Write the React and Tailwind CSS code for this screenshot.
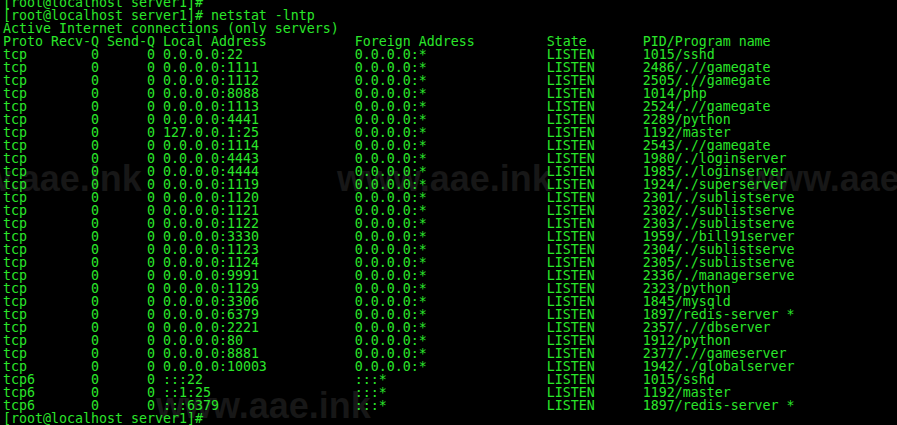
import React from "react";

const rows = [
  ["tcp", "0.0.0.0:22", "0.0.0.0:*", "1015/sshd"],
  ["tcp", "0.0.0.0:1111", "0.0.0.0:*", "2486/.//gamegate"],
  ["tcp", "0.0.0.0:1112", "0.0.0.0:*", "2505/.//gamegate"],
  ["tcp", "0.0.0.0:8088", "0.0.0.0:*", "1014/php"],
  ["tcp", "0.0.0.0:1113", "0.0.0.0:*", "2524/.//gamegate"],
  ["tcp", "0.0.0.0:4441", "0.0.0.0:*", "2289/python"],
  ["tcp", "127.0.0.1:25", "0.0.0.0:*", "1192/master"],
  ["tcp", "0.0.0.0:1114", "0.0.0.0:*", "2543/.//gamegate"],
  ["tcp", "0.0.0.0:4443", "0.0.0.0:*", "1980/./loginserver"],
  ["tcp", "0.0.0.0:4444", "0.0.0.0:*", "1985/./loginserver"],
  ["tcp", "0.0.0.0:1119", "0.0.0.0:*", "1924/./superserver"],
  ["tcp", "0.0.0.0:1120", "0.0.0.0:*", "2301/./sublistserve"],
  ["tcp", "0.0.0.0:1121", "0.0.0.0:*", "2302/./sublistserve"],
  ["tcp", "0.0.0.0:1122", "0.0.0.0:*", "2303/./sublistserve"],
  ["tcp", "0.0.0.0:3330", "0.0.0.0:*", "1959/./bill91server"],
  ["tcp", "0.0.0.0:1123", "0.0.0.0:*", "2304/./sublistserve"],
  ["tcp", "0.0.0.0:1124", "0.0.0.0:*", "2305/./sublistserve"],
  ["tcp", "0.0.0.0:9991", "0.0.0.0:*", "2336/./managerserve"],
  ["tcp", "0.0.0.0:1129", "0.0.0.0:*", "2323/python"],
  ["tcp", "0.0.0.0:3306", "0.0.0.0:*", "1845/mysqld"],
  ["tcp", "0.0.0.0:6379", "0.0.0.0:*", "1897/redis-server *"],
  ["tcp", "0.0.0.0:2221", "0.0.0.0:*", "2357/.//dbserver"],
  ["tcp", "0.0.0.0:80", "0.0.0.0:*", "1912/python"],
  ["tcp", "0.0.0.0:8881", "0.0.0.0:*", "2377/.//gameserver"],
  ["tcp", "0.0.0.0:10003", "0.0.0.0:*", "1942/./globalserver"],
  ["tcp6", ":::22", ":::*", "1015/sshd"],
  ["tcp6", "::1:25", ":::*", "1192/master"],
  ["tcp6", ":::6379", ":::*", "1897/redis-server *"],
];

const pad = (s, n) => s + " ".repeat(Math.max(0, n - s.length));

const lines = [
  "[root@localhost server1]#",
  "[root@localhost server1]# netstat -lntp",
  "Active Internet connections (only servers)",
  "Proto Recv-Q Send-Q Local Address           Foreign Address         State       PID/Program name",
  ...rows.map(
    ([p, l, f, pid]) =>
      pad(p, 6) + "     0      0 " + pad(l, 24) + pad(f, 24) + pad("LISTEN", 12) + pid
  ),
  "[root@localhost server1]#",
];

const marks = [
  { x: -73, y: 161 },
  { x: 337, y: 161 },
  { x: 747, y: 161 },
  { x: 156, y: 388 },
];

export default function App() {
  return (
    <div className="relative w-[897px] h-[425px] overflow-hidden bg-black">
      {marks.map((m, i) => (
        <div
          key={i}
          className="absolute whitespace-nowrap font-bold text-[36px] leading-none text-[#171717] font-['Liberation_Sans',Arial,sans-serif]"
          style={{ left: m.x, top: m.y }}
        >
          www.aae.ink
        </div>
      ))}
      <div className="relative -mt-[4px] pl-[3px] font-['DejaVu_Sans_Mono',monospace] text-[13.29px] leading-[13px] text-[#2ae62a]">
        {lines.map((l, i) => (
          <div key={i} className="whitespace-pre h-[13px]">
            {l}
          </div>
        ))}
      </div>
    </div>
  );
}
